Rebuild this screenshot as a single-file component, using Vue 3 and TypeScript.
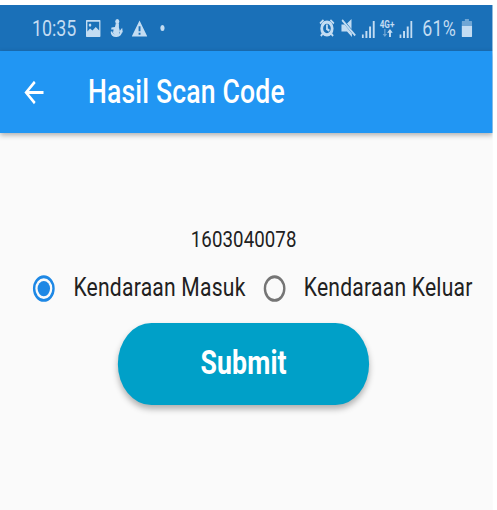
<script setup lang="ts">
import { ref } from 'vue'

interface Option {
  value: string
  label: string
}

const code = '1603040078'
const options: Option[] = [
  { value: 'in', label: 'Kendaraan Masuk' },
  { value: 'out', label: 'Kendaraan Keluar' },
]
const selected = ref<string>('in')
</script>

<template>
  <div class="screen">
    <header class="status">
      <div class="group left">
        <span class="time">10:35</span>
        <svg class="photo" viewBox="0 0 18 17">
          <path fill-rule="evenodd" d="M1 0h16a1 1 0 0 1 1 1v15a1 1 0 0 1-1 1H1a1 1 0 0 1-1-1V1a1 1 0 0 1 1-1ZM1.800 1.800v9.700L5 8.500l3 2 4-3.500 4.200 3.500V1.800ZM5 3.500a1.600 1.600 0 1 1 0 3.200a1.600 1.600 0 1 1 0-3.200Z" />
        </svg>
        <svg class="figure" viewBox="0 0 15 18">
          <circle cx="8.300" cy="2.500" r="2.500" />
          <path d="M6.500 4.500h3.800v4l1.200 3.500-1.500 4-4 1-3-3 .8-3.500L.8 10.500l.4-2L5.500 8Z" />
          <path class="stroke" d="M1 12.500c.5 3 3 4.500 6.500 4.300S13 15 13.700 11.500M11.500 13.200l2.200-2.200.6 2.500" />
        </svg>
        <svg class="warning" viewBox="0 0 20 17">
          <path fill-rule="evenodd" d="M10 0 20 17H0ZM8.800 6v5.500h2.400V6ZM8.800 13v2.200h2.400V13Z" />
        </svg>
        <span class="dot"></span>
      </div>
      <div class="group right">
        <svg class="alarm" viewBox="0 0 19 18">
          <path class="stroke" d="M1 4.500 5.300 1M18 4.500 13.700 1M4.500 14.500l-2.500 2.500M14.500 14.500l2.500 2.500" />
          <circle class="ring" cx="9.500" cy="9.500" r="6.400" />
          <path class="stroke" d="M9.500 5.500v4.500l3 1.700" />
        </svg>
        <svg class="mute" viewBox="0 0 18 18">
          <path d="M0 5.500h4l9 9V18L7 12.500H0ZM7 4.500l5.500-4.500v10Z" />
          <path class="stroke" d="m1 1 16 15.500" />
        </svg>
        <svg class="signal" viewBox="0 0 16 17">
          <path d="M0 13.500h2.400V17H0ZM4.500 10h2.400v7H4.500ZM9 5.500h2.400V17H9ZM13.500 0h2.500v17h-2.500Z" />
        </svg>
        <div class="network">
          <span>4G+</span>
          <svg viewBox="0 0 13 8">
            <path class="faint" d="M2.500 0h1.500v5h2L3.250 8 .5 5h2Z" />
            <path d="M8.300 8h2.400V3.800h2.300L9.500 0 6 3.800h2.300Z" />
          </svg>
        </div>
        <svg class="signal" viewBox="0 0 16 17">
          <path d="M0 13.500h2.400V17H0ZM4.500 10h2.400v7H4.500ZM9 5.500h2.400V17H9ZM13.500 0h2.500v17h-2.500Z" />
        </svg>
        <span class="percent">61%</span>
        <svg class="battery" viewBox="0 0 13 18">
          <path class="faint" d="M4 0h5v2h3a1 1 0 0 1 1 1v4H0V3a1 1 0 0 1 1-1h3Z" />
          <path d="M0 7h13v10a1 1 0 0 1-1 1H1a1 1 0 0 1-1-1Z" />
        </svg>
      </div>
    </header>

    <nav class="appbar">
      <button class="back" type="button" aria-label="Kembali">
        <svg viewBox="0 0 24 24">
          <path d="M20 11H7.830l5.590-5.590L12 4l-8 8 8 8 1.410-1.410L7.830 13H20v-2z" />
        </svg>
      </button>
      <h1>Hasil Scan Code</h1>
    </nav>

    <main>
      <p class="code">{{ code }}</p>
      <div class="options" role="radiogroup">
        <div
          v-for="option in options"
          :key="option.value"
          class="option"
          role="radio"
          :aria-checked="selected === option.value"
          @click="selected = option.value"
        >
          <span class="radio" :class="{ checked: selected === option.value }">
            <svg viewBox="0 0 24 24">
              <circle class="outer" cx="12" cy="12" r="8.100" />
              <circle v-if="selected === option.value" class="inner" cx="12" cy="12" r="5.200" />
            </svg>
          </span>
          <span class="label">{{ option.label }}</span>
        </div>
      </div>
      <button class="submit" type="button">Submit</button>
    </main>
  </div>
</template>

<style>
body {
  background: #fff;
  overflow: hidden;
}
</style>

<style scoped>
/* The screen is drawn at its natural proportions and narrowed as a whole. */
.screen {
  width: 602.4px;
  height: 505px;
  margin-top: 5px;
  display: flex;
  flex-direction: column;
  overflow: hidden;
  background: #fafafa;
  color: #212121;
  font-family: Roboto, sans-serif;
  transform: scaleX(0.8184);
  transform-origin: 0 0;
}
svg {
  display: block;
  flex: none;
}
.status {
  height: 46px;
  flex: none;
  box-sizing: border-box;
  display: flex;
  justify-content: space-between;
  padding: 0 25.5px 0 39px;
  background: #1a70b8;
  color: #c3dcf2;
}
.status svg {
  fill: currentColor;
}
.status .stroke,
.status .ring {
  fill: none;
  stroke: currentColor;
  stroke-width: 2.2;
}
.status .ring {
  stroke-width: 3.4;
}
.status .faint {
  opacity: 0.5;
}
.group {
  display: flex;
  align-items: center;
}
.time,
.percent {
  padding-top: 2px;
  font-size: 21.8px;
  line-height: 44px;
}
.time {
  width: 65.5px;
}
.photo {
  width: 18px;
  height: 17px;
}
.figure {
  width: 15px;
  height: 18px;
  margin-left: 12px;
}
.warning {
  width: 19px;
  height: 17px;
  margin-left: 11px;
}
.dot {
  width: 5.5px;
  height: 5.5px;
  margin-left: 16px;
  border-radius: 50%;
  background: currentColor;
}
.alarm {
  width: 19px;
  height: 18px;
}
.mute {
  width: 18px;
  height: 18px;
  margin-left: 8px;
}
.signal {
  width: 16px;
  height: 17px;
  margin: 2px 0 0 7.5px;
}
.network {
  width: 18px;
  margin: 1px 0 0 5.5px;
  font-size: 10px;
  line-height: 9px;
  font-weight: 700;
}
.network span {
  display: block;
}
.network svg {
  width: 13px;
  height: 8px;
  margin-left: 3px;
}
.network + .signal {
  margin-left: 6px;
}
.percent {
  width: 48px;
  margin-left: 12px;
  letter-spacing: 0.3px;
}
.battery {
  width: 13px;
  height: 18px;
}
.appbar {
  position: relative;
  height: 82px;
  flex: none;
  display: flex;
  align-items: center;
  background: #2196f3;
  color: #fff;
  box-shadow: 0 2px 6px rgba(0, 0, 0, 0.32);
}
.back {
  width: 82px;
  padding: 0 0 0 24px;
  margin-right: 25.5px;
  border: 0;
  background: none;
  color: inherit;
}
.back svg {
  width: 35px;
  height: 35px;
  fill: currentColor;
}
h1 {
  margin: 0;
  font-size: 32.5px;
  font-weight: 500;
  line-height: 40px;
  letter-spacing: 0.2px;
}
main {
  display: flex;
  flex-direction: column;
  align-items: center;
  padding-top: 93px;
}
.code {
  margin: 0;
  padding-right: 7px;
  font-size: 22.8px;
  line-height: 28px;
  letter-spacing: 0.1px;
}
.options {
  align-self: stretch;
  height: 68.5px;
  display: flex;
  align-items: center;
  padding-left: 18.6px;
}
.option {
  display: flex;
  align-items: center;
  white-space: nowrap;
}
.radio {
  width: 70.3px;
  flex: none;
  display: flex;
  justify-content: center;
}
.radio svg {
  width: 35.1px;
  height: 35.1px;
}
.outer {
  fill: none;
  stroke: #757575;
  stroke-width: 2;
}
.checked .outer {
  stroke: #1e88e5;
}
.inner {
  fill: #1e88e5;
}
.label {
  padding: 0 0 2px 0.8px;
  font-size: 25.8px;
  line-height: 32px;
  letter-spacing: 0.26px;
}
.submit {
  width: 307px;
  height: 82px;
  margin: 0 7px 0 0;
  padding: 0 0 2px;
  border: 0;
  border-radius: 41px;
  background: #00a0c8;
  color: #fff;
  box-shadow: 0 4px 7px rgba(0, 0, 0, 0.3);
  font: 700 32.6px/40px Roboto, sans-serif;
  letter-spacing: 0.1px;
}
</style>
